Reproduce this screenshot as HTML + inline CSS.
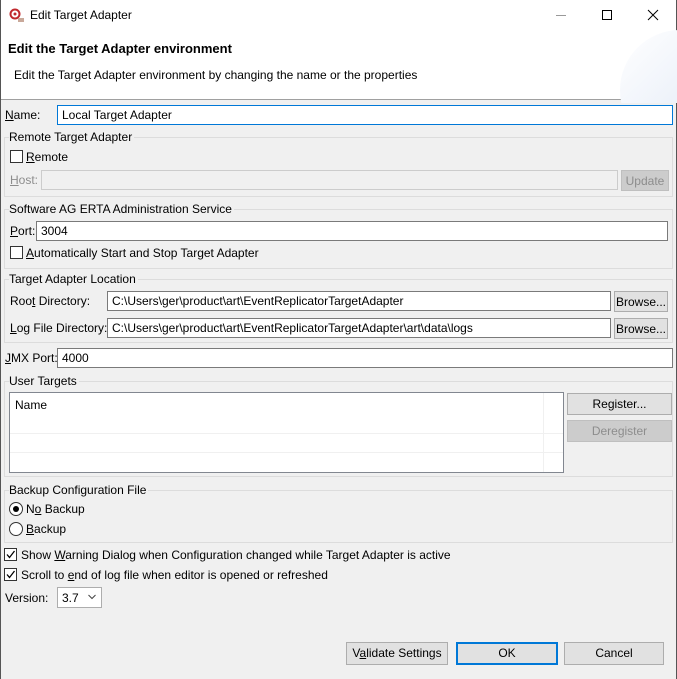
<!DOCTYPE html>
<html><head><meta charset="utf-8"><style>
*{box-sizing:border-box;margin:0;padding:0}
body{width:677px;height:679px;overflow:hidden;background:#f0f0f0;font-family:"Liberation Sans",sans-serif;font-size:12px;color:#000;position:relative}
.a{position:absolute}
.t{position:absolute;line-height:16px;white-space:nowrap}
.in{position:absolute;background:#fff;border:1px solid #7a7a7a;line-height:18px;padding-left:4px;white-space:nowrap;overflow:hidden}
.grp{position:absolute;border:1px solid #dcdcdc}
.gl{position:absolute;background:#f0f0f0;line-height:14px;padding-right:2px}
.btn{position:absolute;background:#e1e1e1;border:1px solid #adadad;text-align:center;line-height:20px}
.dis{background:#cccccc;border-color:#bfbfbf;color:#8d8d8d}
.cb{position:absolute;width:13px;height:13px;border:1px solid #333;background:#fff}
u{text-decoration:underline}
</style></head><body>
<div class="a" style="left:0;top:0;width:677px;height:99px;background:#fff"></div>
<div class="a" style="left:0;top:99px;width:677px;height:1px;background:#a0a0a0"></div>
<div class="a" style="left:0;top:0;width:1px;height:679px;background:#555"></div>
<div class="a" style="left:676px;top:0;width:1px;height:679px;background:#555"></div>
<div class="a" style="left:620px;top:30px;width:120px;height:120px;border-radius:50%;background:linear-gradient(135deg,#fff,#dde6f5);clip-path:inset(0 57px 47px 0)"></div>
<svg class="a" style="left:9px;top:8px" width="16" height="16"><circle cx="6" cy="6" r="4.5" fill="none" stroke="#c0282d" stroke-width="2"/><circle cx="6" cy="6" r="1.5" fill="#c0282d"/><rect x="9" y="10" width="6" height="4" fill="#c9a99a"/></svg>
<div class="t" style="left:30px;top:7px;font-size:12px">Edit Target Adapter</div>
<div class="a" style="left:556px;top:15px;width:10px;height:1px;background:#999"></div>
<div class="a" style="left:602px;top:10px;width:10px;height:10px;border:1px solid #000"></div>
<svg class="a" style="left:647px;top:9px" width="12" height="12"><path d="M1 1 L11 11 M11 1 L1 11" stroke="#000" stroke-width="1"/></svg>
<div class="t" style="left:8px;top:41px;font-weight:bold;font-size:13px">Edit the Target Adapter environment</div>
<div class="t" style="left:14px;top:67px">Edit the Target Adapter environment by changing the name or the properties</div>

<div class="t" style="left:5px;top:107px"><u>N</u>ame:</div>
<div class="in" style="left:57px;top:105px;width:616px;height:20px;border-color:#0078d7">Local Target Adapter</div>

<div class="grp" style="left:4px;top:137px;width:669px;height:60px"></div>
<div class="gl" style="left:9px;top:130px">Remote Target Adapter</div>
<div class="cb" style="left:10px;top:150px"></div>
<div class="t" style="left:26px;top:149px"><u>R</u>emote</div>
<div class="t" style="left:10px;top:172px;color:#8d8d8d"><u>H</u>ost:</div>
<div class="in" style="left:41px;top:170px;width:577px;height:20px;background:#f0f0f0;border-color:#ccc"></div>
<div class="btn dis" style="left:621px;top:170px;width:48px;height:21px">Update</div>

<div class="grp" style="left:4px;top:209px;width:669px;height:60px"></div>
<div class="gl" style="left:9px;top:202px">Software AG ERTA Administration Service</div>
<div class="t" style="left:10px;top:223px"><u>P</u>ort:</div>
<div class="in" style="left:36px;top:221px;width:632px;height:20px">3004</div>
<div class="cb" style="left:10px;top:246px"></div>
<div class="t" style="left:26px;top:245px"><u>A</u>utomatically Start and Stop Target Adapter</div>

<div class="grp" style="left:4px;top:279px;width:669px;height:64px"></div>
<div class="gl" style="left:9px;top:272px">Target Adapter Location</div>
<div class="t" style="left:10px;top:293px">Roo<u>t</u> Directory:</div>
<div class="in" style="left:107px;top:291px;width:504px;height:20px">C:\Users\ger\product\art\EventReplicatorTargetAdapter</div>
<div class="btn" style="left:614px;top:291px;width:54px;height:21px">Browse...</div>
<div class="t" style="left:10px;top:320px"><u>L</u>og File Directory:</div>
<div class="in" style="left:107px;top:318px;width:504px;height:20px">C:\Users\ger\product\art\EventReplicatorTargetAdapter\art\data\logs</div>
<div class="btn" style="left:614px;top:318px;width:54px;height:21px">Browse...</div>

<div class="t" style="left:5px;top:350px"><u>J</u>MX Port:</div>
<div class="in" style="left:57px;top:348px;width:616px;height:20px">4000</div>

<div class="grp" style="left:4px;top:381px;width:669px;height:96px"></div>
<div class="gl" style="left:9px;top:374px">User Targets</div>
<div class="a" style="left:9px;top:392px;width:555px;height:81px;background:#fff;border:1px solid #828790"></div>
<div class="a" style="left:10px;top:433px;width:553px;height:1px;background:#f0f0f0"></div>
<div class="a" style="left:10px;top:452px;width:553px;height:1px;background:#f0f0f0"></div>
<div class="a" style="left:543px;top:393px;width:1px;height:79px;background:#f0f0f0"></div>
<div class="t" style="left:15px;top:397px">Name</div>
<div class="btn" style="left:567px;top:393px;width:105px;height:22px">Register...</div>
<div class="btn dis" style="left:567px;top:420px;width:105px;height:22px">Deregister</div>

<div class="grp" style="left:4px;top:490px;width:669px;height:53px"></div>
<div class="gl" style="left:9px;top:483px">Backup Configuration File</div>
<div class="a" style="left:9px;top:502px;width:14px;height:14px;border:1px solid #333;border-radius:50%;background:#fff"></div>
<div class="a" style="left:13px;top:506px;width:6px;height:6px;border-radius:50%;background:#000"></div>
<div class="t" style="left:26px;top:501px">N<u>o</u> Backup</div>
<div class="a" style="left:9px;top:522px;width:14px;height:14px;border:1px solid #333;border-radius:50%;background:#fff"></div>
<div class="t" style="left:26px;top:521px"><u>B</u>ackup</div>

<div class="cb" style="left:4px;top:548px"></div>
<svg class="a" style="left:5px;top:549px" width="11" height="11"><path d="M2 5.5 L4.5 8.5 L9.5 2" fill="none" stroke="#000" stroke-width="1.3"/></svg>
<div class="t" style="left:21px;top:547px">Show <u>W</u>arning Dialog when Configuration changed while Target Adapter is active</div>
<div class="cb" style="left:4px;top:568px"></div>
<svg class="a" style="left:5px;top:569px" width="11" height="11"><path d="M2 5.5 L4.5 8.5 L9.5 2" fill="none" stroke="#000" stroke-width="1.3"/></svg>
<div class="t" style="left:21px;top:567px">Scroll to <u>e</u>nd of log file when editor is opened or refreshed</div>

<div class="t" style="left:5px;top:590px">Version:</div>
<div class="a" style="left:57px;top:587px;width:45px;height:21px;background:#fff;border:1px solid #adadad"></div>
<div class="t" style="left:62px;top:590px">3.7</div>
<svg class="a" style="left:88px;top:594px" width="8" height="6"><path d="M0.5 1 L4 4.5 L7.5 1" fill="none" stroke="#444"/></svg>

<div class="btn" style="left:346px;top:642px;width:102px;height:23px">V<u>a</u>lidate Settings</div>
<div class="btn" style="left:456px;top:642px;width:102px;height:23px;border:2px solid #0078d7;line-height:19px">OK</div>
<div class="btn" style="left:564px;top:642px;width:100px;height:23px">Cancel</div>
</body></html>
